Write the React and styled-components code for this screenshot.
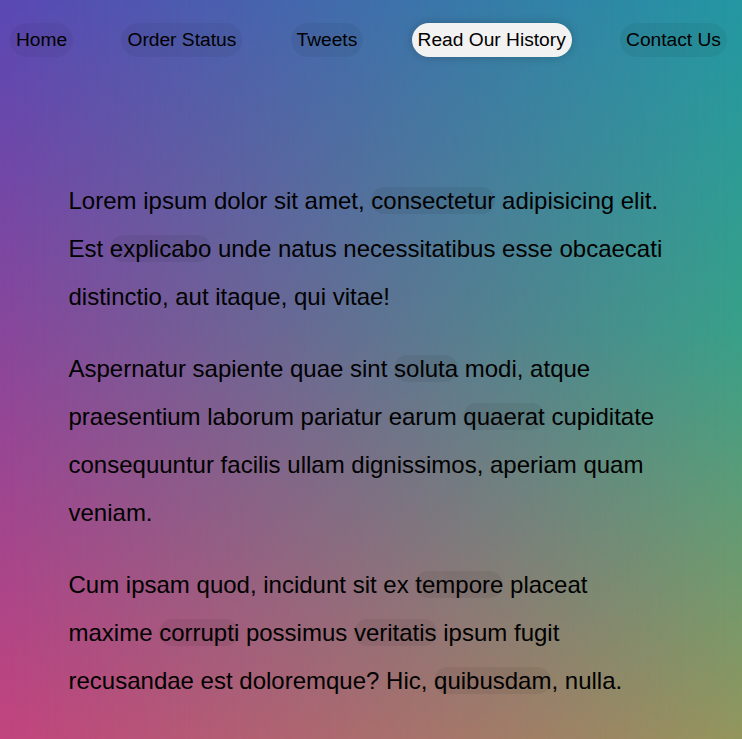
import React from 'react';
import styled, { createGlobalStyle } from 'styled-components';

const navItems = [
  { label: 'Home' },
  { label: 'Order Status' },
  { label: 'Tweets' },
  { label: 'Read Our History', active: true },
  { label: 'Contact Us' },
];

const App = () => {
  return (
    <>
      <GlobalStyle />
      <Page>
        <Menu>
          {navItems.map((item) => (
            <li key={item.label}>
              <MenuLink href="#" $active={item.active}>
                {item.label}
              </MenuLink>
            </li>
          ))}
        </Menu>

        <Article>
          <Paragraph>
            Lorem ipsum dolor sit amet, <Mark href="#">consectetur</Mark> adipisicing elit.
            Est <Mark href="#">explicabo</Mark> unde natus necessitatibus esse obcaecati
            distinctio, aut itaque, qui vitae!
          </Paragraph>
          <Paragraph>
            Aspernatur sapiente quae sint <Mark href="#">soluta</Mark> modi, atque
            praesentium laborum pariatur earum <Mark href="#">quaerat</Mark> cupiditate
            consequuntur facilis ullam dignissimos, aperiam quam veniam.
          </Paragraph>
          <Paragraph>
            Cum ipsam quod, incidunt sit ex <Mark href="#">tempore</Mark> placeat maxime{' '}
            <Mark href="#">corrupti</Mark> possimus <Mark href="#">veritatis</Mark> ipsum
            fugit recusandae est doloremque? Hic, <Mark href="#">quibusdam</Mark>, nulla.
          </Paragraph>
        </Article>
      </Page>
    </>
  );
};

export default App;

// --- estilos ---

const GlobalStyle = createGlobalStyle`
  * { box-sizing: border-box; }
  html, body {
    margin: 0;
    padding: 0;
  }
  body {
    font-family: "Liberation Sans", Arial, sans-serif;
  }
`;

const Page = styled.div`
  position: relative;
  min-height: 100vh;
  overflow: hidden;
  /* coluna esquerda: roxo -> rosa */
  background: linear-gradient(to bottom, #5a48b4 0%, #c2447e 100%);

  /* coluna direita (teal -> verde -> oliva), misturada da esquerda p/ direita */
  &::before {
    content: '';
    position: absolute;
    inset: 0;
    background: linear-gradient(to bottom, #2397a2 0%, #38a088 45%, #93965c 100%);
    -webkit-mask-image: linear-gradient(to right, transparent, #000);
    mask-image: linear-gradient(to right, transparent, #000);
  }
`;

const Menu = styled.ul`
  position: relative;
  list-style: none;
  margin: 0;
  padding: 23px 15px 0 10px;
  display: flex;
  justify-content: space-between;
`;

const MenuLink = styled.a`
  display: block;
  padding: 6px;
  font-size: 19.2px;
  color: #000;
  text-decoration: none;
  border-radius: 20px;
  background: ${(p) => (p.$active ? '#f2f2f2' : 'rgba(0, 0, 0, 0.05)')};
  box-shadow: ${(p) => (p.$active ? '0 0 10px rgba(0, 0, 0, 0.2)' : 'none')};
`;

const Article = styled.main`
  position: relative;
  max-width: 605px;
  margin: 0 auto;
  padding-top: 120px;
`;

const Paragraph = styled.p`
  margin: 0 0 24px;
  font-size: 24px;
  line-height: 2;
  color: #000;
`;

const Mark = styled.a`
  color: #000;
  text-decoration: none;
  background: rgba(0, 0, 0, 0.06);
  border-radius: 20px;
`;
